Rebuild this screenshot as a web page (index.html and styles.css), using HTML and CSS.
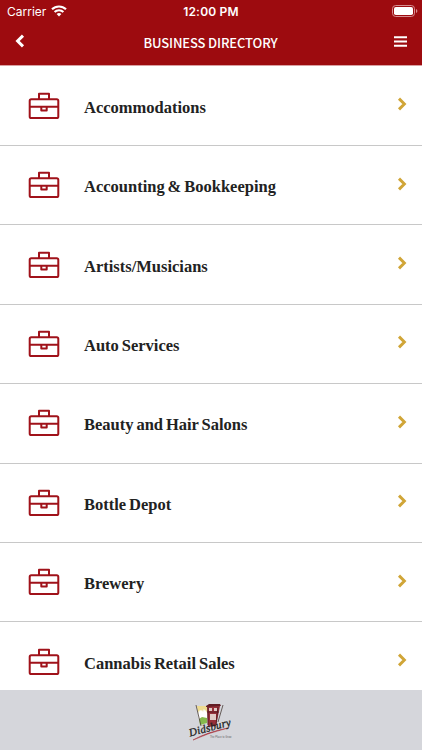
FILE: index.html
```
<!DOCTYPE html>
<html lang="en">
<head>
  <meta charset="UTF-8">
  <meta name="viewport" content="width=device-width, initial-scale=1">
  <title>Business Directory</title>
  <link rel="stylesheet" href="styles.css">
</head>
<body>
  <!-- shared icons -->
  <svg class="sprite">
    <symbol id="briefcase" viewBox="0 0 32 28">
      <g fill="none" stroke="#a0121a" stroke-width="2" stroke-linejoin="round">
        <rect x="1.7" y="7.2" width="28.6" height="18.9" rx="1.6"/>
        <path d="M11 7V1.7h10V7M2 14.7h28M13.3 15v3.5h5.4V15"/>
      </g>
    </symbol>
    <symbol id="chevron" viewBox="0 0 10 14">
      <path d="M2 1.6L7.4 7 2 12.4" fill="none" stroke="#d0a537" stroke-width="2.9"/>
    </symbol>
  </svg>

  <div class="app">
    <header class="header">
      <div class="status">
        <div class="carrier">
          <span>Carrier</span>
          <svg class="wifi" viewBox="0 0 16 12">
            <g fill="none" stroke="#fff" stroke-width="2.1">
              <path d="M1 4.3a10 10 0 0 1 14 0"/>
              <path d="M3.6 7.1a6.2 6.2 0 0 1 8.8 0"/>
            </g>
            <path d="M5.6 9.1a3.4 3.4 0 0 1 4.8 0L8 11.6z" fill="#fff"/>
          </svg>
        </div>
        <div class="time">12:00 PM</div>
        <svg class="battery" viewBox="0 0 26 12">
          <rect x=".5" y=".5" width="22" height="11" rx="3.2" fill="none" stroke="#d78d90"/>
          <rect x="2" y="2" width="19" height="8" rx="1.8" fill="#fff"/>
          <path d="M24 4v4q1.4-.6 1.4-2T24 4z" fill="#d78d90"/>
        </svg>
      </div>
      <div class="navbar">
        <svg class="back" viewBox="0 0 10 14">
          <path d="M8 1.6L2.6 7 8 12.4" fill="none" stroke="#fff" stroke-width="3"/>
        </svg>
        <h1 class="title">BUSINESS DIRECTORY</h1>
        <svg class="menu" viewBox="0 0 13 11">
          <path d="M0 1.2h13M0 5.5h13M0 9.8h13" stroke="#fff" stroke-width="2"/>
        </svg>
      </div>
    </header>

    <ul class="list">
      <li class="row">
        <svg class="icon"><use href="#briefcase"/></svg>
        <span class="label">Accommodations</span>
        <svg class="arrow"><use href="#chevron"/></svg>
      </li>
      <li class="row">
        <svg class="icon"><use href="#briefcase"/></svg>
        <span class="label">Accounting &amp; Bookkeeping</span>
        <svg class="arrow"><use href="#chevron"/></svg>
      </li>
      <li class="row">
        <svg class="icon"><use href="#briefcase"/></svg>
        <span class="label">Artists/Musicians</span>
        <svg class="arrow"><use href="#chevron"/></svg>
      </li>
      <li class="row">
        <svg class="icon"><use href="#briefcase"/></svg>
        <span class="label">Auto Services</span>
        <svg class="arrow"><use href="#chevron"/></svg>
      </li>
      <li class="row">
        <svg class="icon"><use href="#briefcase"/></svg>
        <span class="label">Beauty and Hair Salons</span>
        <svg class="arrow"><use href="#chevron"/></svg>
      </li>
      <li class="row">
        <svg class="icon"><use href="#briefcase"/></svg>
        <span class="label">Bottle Depot</span>
        <svg class="arrow"><use href="#chevron"/></svg>
      </li>
      <li class="row">
        <svg class="icon"><use href="#briefcase"/></svg>
        <span class="label">Brewery</span>
        <svg class="arrow"><use href="#chevron"/></svg>
      </li>
      <li class="row">
        <svg class="icon"><use href="#briefcase"/></svg>
        <span class="label">Cannabis Retail Sales</span>
        <svg class="arrow"><use href="#chevron"/></svg>
      </li>
    </ul>

    <footer class="footer">
      <svg class="logo" viewBox="0 0 46 38">
        <!-- mountain panel -->
        <path d="M9 5h10v17l-7 2z" fill="#f3f3df"/>
        <path d="M9 5h10v6l-3-3-2 2-2-1-2 2z" fill="#eedb8f"/>
        <path d="M10 13l3-4 2 2 2-2 2 3v5l-8 1z" fill="#fff"/>
        <path d="M11 18l3-2 5 1v5l-7 2z" fill="#86b94d"/>
        <!-- red building -->
        <path d="M19 5h13l-4 20-8 1z" fill="#973039"/>
        <path d="M18 5l3-2h11l1 2-15 1z" fill="#621d24"/>
        <path d="M21 7h3v3h-3zM26 7h3v3h-3zM22 13h6v6h-6z" fill="#e0cbc6"/>
        <path d="M19 11h12M20 6v18M30 6l-2 18" fill="none" stroke="#4b171c" stroke-width=".8"/>
        <path d="M8 4l5 21M35 4l-5 17" fill="none" stroke="#493d38" stroke-width=".8"/>
        <path d="M5 39q14-8 35-12-20 5-35 12z" fill="#a52630" stroke="#a52630" stroke-width=".5"/>
        <text class="logo-name" x="2" y="35.5" transform="rotate(-15 2 35.5)" textLength="43">Didsbury</text>
        <text class="logo-tag" x="22" y="37">The Place to Grow</text>
      </svg>
    </footer>
  </div>
</body>
</html>
```
FILE: styles.css
```
* {
  box-sizing: border-box;
}

body {
  margin: 0;
  background-color: #fff;
  font-family: "Noto Sans CJK JP", "Open Sans", sans-serif;
}

svg {
  display: block;
  flex-shrink: 0;
}

.sprite {
  display: none;
}

.app {
  display: flex;
  flex-direction: column;
  height: 100vh;
  overflow: hidden;
}

.header {
  flex: 0 0 66px;
  background-color: #9d0b0f;
  border-bottom: 1px solid #d9a0a2;
  color: #fff;
}

.status {
  display: grid;
  grid-template-columns: 1fr auto 1fr;
  align-items: center;
  height: 22px;
  padding: 0 7px;
  font-family: Inter, sans-serif;
  font-size: 12px;
}

.carrier {
  display: flex;
  align-items: center;
  gap: 5px;
}

.wifi {
  width: 16px;
  height: 12px;
}

.time {
  font-weight: 600;
  letter-spacing: 0.2px;
}

.battery {
  width: 26px;
  height: 12px;
  justify-self: end;
  margin-right: -3px;
}

.navbar {
  display: flex;
  justify-content: space-between;
  align-items: center;
  height: 38px;
  padding: 0 15px;
}

.back {
  width: 10px;
  height: 14px;
}

.title {
  margin: 4px 0 0 2px;
  font-size: 13px;
  font-weight: 500;
  letter-spacing: -0.13px;
  line-height: 20px;
}

.menu {
  width: 13px;
  height: 11px;
}

.list {
  flex: 1;
  min-height: 0;
  margin: 0;
  padding: 0.6px 0 0;
  overflow: hidden;
  list-style: none;
}

.row {
  display: flex;
  align-items: center;
  height: 79.4px;
  padding: 0 15px 0 28px;
  border-bottom: 1px solid #c8c8c8;
}

.icon {
  width: 32px;
  height: 28px;
}

.label {
  flex: 1;
  margin: 4px 0 0 24px;
  color: #222;
  font-family: "Source Serif Pro", "Liberation Serif", serif;
  font-size: 16.5px;
  font-weight: 700;
  word-spacing: -1.2px;
}

.arrow {
  width: 10px;
  height: 14px;
  margin-top: -3px;
}

.footer {
  display: flex;
  flex: 0 0 60px;
  justify-content: center;
  align-items: center;
  background-color: #d5d6db;
}

.logo {
  width: 46px;
  height: 38px;
  overflow: visible;
}

.logo-name {
  fill: #222;
  font-family: "Liberation Serif", serif;
  font-size: 11px;
  font-style: italic;
  stroke: #222;
  stroke-width: 0.3px;
}

.logo-tag {
  fill: #666;
  font-family: "Liberation Sans", sans-serif;
  font-size: 2.6px;
}
```
